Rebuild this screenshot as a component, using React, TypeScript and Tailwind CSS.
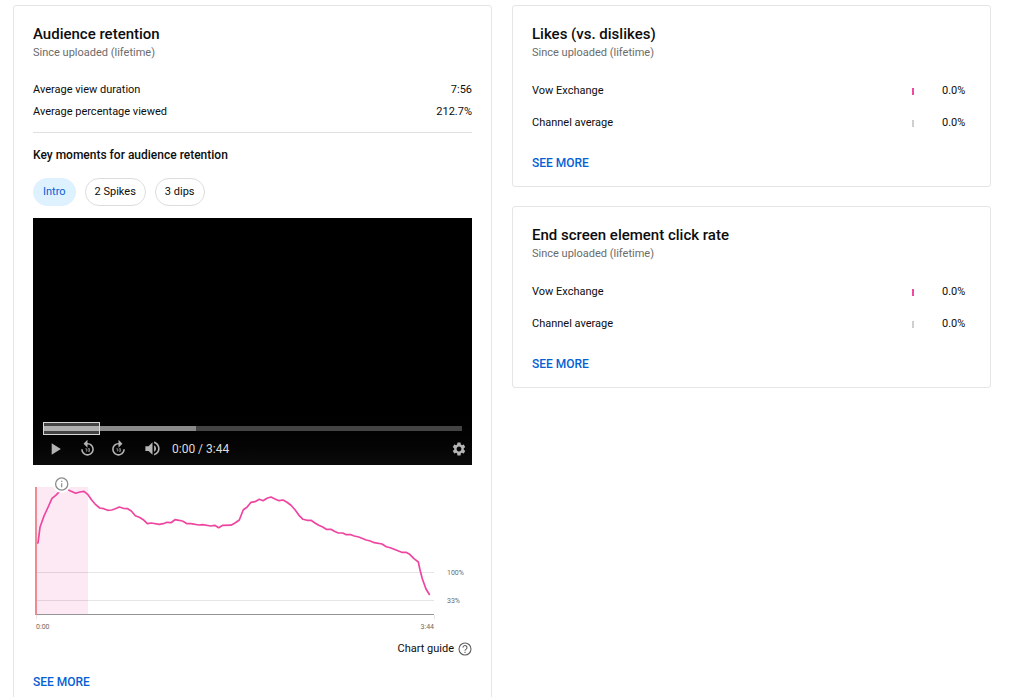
import React from "react";
import { MdForward10, MdPlayArrow, MdReplay10, MdSettings, MdVolumeUp } from "react-icons/md";

const retention =
  "3,69 5,69 7,53.3 11,42 14.7,34 19,24.3 22.7,21.3 26.7,17.3 30.7,13.5 37,16.7 42.7,19.3 46.7,18 51,17.3 55,20.7 58.7,26 62.7,30.7 66.7,34 70.7,34.7 74.7,36.3 78.7,36 82.3,34.7 86.3,33 90.3,34.3 94.7,34.7 98.3,37 102.3,41.7 106.3,43.3 110.3,45.7 114.3,49.7 118.3,49 126.3,50.3 130.3,49.7 134,48.3 138,48.7 142,45.7 146,46.3 150,47.3 154,49.7 158,49.7 165.7,51 169.7,50.7 177.7,52 181.7,51.3 185.7,53.7 189.7,51.3 198,51.2 202,49 206.3,46 210.3,35.7 214,33.3 218,28.3 222,27.7 226.3,25.3 230,26.7 234,24.3 238,23 242,25 246,26.7 250,26 254,28.3 258,31.3 262,35.7 266,41.3 270,45.3 274,46.3 278,46.3 282,49 285.7,51.3 289.7,53 293.3,55.3 298,55.3 301.3,57.3 305.3,59 309.7,59 313.3,60.7 318,60.7 321.3,62 325.7,63 333.3,66 337.3,67 341.3,68.7 349,70 353.3,72.7 357.3,73.7 368.7,78.3 373,78.3 376.7,80.3 381,84.7 385.3,88 387,95.7 389.3,104.7 393,115 396.7,121";

function Card({ title, children }: { title: string; children: React.ReactNode }) {
  return (
    <section className="rounded-[3px] border border-[#e5e5e5] bg-white px-[19px] pt-[18px] pb-[15px]">
      <h2 className="text-[15px] leading-5 font-medium text-[#0d0d0d]">{title}</h2>
      <p className="text-[11px] leading-[18px] text-[#6b6b6b]">Since uploaded (lifetime)</p>
      {children}
    </section>
  );
}

function SeeMore() {
  return (
    <a href="#more" className="block w-fit text-[12px] leading-4 font-medium text-[#065fd4]">
      SEE MORE
    </a>
  );
}

function Metric({ label, value }: { label: string; value: string }) {
  return (
    <div className="flex justify-between">
      <dt>{label}</dt>
      <dd>{value}</dd>
    </div>
  );
}

function ComparisonRow({ label, own }: { label: string; own?: boolean }) {
  return (
    <div className="flex items-center">
      <dt className="flex-1">{label}</dt>
      <dd className="flex items-center gap-7">
        <span className={own ? "h-[7px] w-[2px] bg-[#ee4ba0]" : "h-[7px] w-[2px] bg-[#cfcfcf]"} />
        <span className="w-[29px]">0.0%</span>
      </dd>
    </div>
  );
}

function ComparisonCard({ title }: { title: string }) {
  return (
    <Card title={title}>
      <dl className="mt-[13px] mb-4 text-[11px] leading-8">
        <ComparisonRow label="Vow Exchange" own />
        <ComparisonRow label="Channel average" />
      </dl>
      <SeeMore />
    </Card>
  );
}

function Player() {
  return (
    <div className="mt-3 flex aspect-video flex-col justify-end bg-black bg-linear-to-b from-black from-70% to-[#0b0b0b] px-[10px] pb-[6px] text-[#b4b4b4]">
      <div className="relative flex h-[13px] items-center">
        <div className="h-[5px] w-full bg-[#444444]">
          <div className="h-full w-[36.5%] bg-[#8a8a8a]" />
        </div>
        <div className="absolute inset-y-0 left-0 flex w-[57px] items-center border border-[#d8d8d8] bg-[#444444]">
          <div className="h-[5px] w-full bg-[#b0b0b0]" />
        </div>
      </div>
      <div className="mt-1 flex h-5 items-center">
        <button aria-label="Play" className="ml-[2px]">
          <MdPlayArrow size={20} />
        </button>
        <button aria-label="Back 10 seconds" className="ml-[13px]">
          <MdReplay10 size={19} />
        </button>
        <button aria-label="Forward 10 seconds" className="ml-3">
          <MdForward10 size={19} />
        </button>
        <button aria-label="Mute" className="ml-[15px]">
          <MdVolumeUp size={19} />
        </button>
        <span className="ml-[10px] flex-1 text-[12px] leading-5 text-[#dddddd]">0:00 / 3:44</span>
        <button aria-label="Settings" className="-mr-[5px]">
          <MdSettings size={16} />
        </button>
      </div>
    </div>
  );
}

function RetentionChart() {
  return (
    <svg
      viewBox="0 0 439 160"
      role="img"
      aria-label="Audience retention over time"
      className="mt-[9px] block w-full fill-[#6b6b6b] text-[7px]"
    >
      <rect x="3" y="13" width="52" height="128" fill="#fce9f3" />
      <path d="M3 98.5H401M3 126.5H401M3.5 141v4M401.5 141v4" stroke="#000000" strokeOpacity="0.1" />
      <path d="M3 140.5H401" stroke="#949494" />
      <polyline points={retention} fill="none" stroke="#ee45a0" strokeWidth="1.7" strokeLinejoin="round" />
      <path d="M3 13V141" stroke="#ef8a94" strokeWidth="2" />
      <circle cx="28.7" cy="10" r="9" fill="#ffffff" />
      <circle cx="28.7" cy="10" r="6.1" fill="#ffffff" stroke="#8c8c8c" strokeWidth="1.3" />
      <path d="M28.7 9.2V13.3M28.7 6.7V8" stroke="#8c8c8c" strokeWidth="1.2" />
      <text x="414" y="101">100%</text>
      <text x="414" y="129">33%</text>
      <text x="3" y="155">0:00</text>
      <text x="401" y="155" textAnchor="end">3:44</text>
    </svg>
  );
}

export default function App() {
  return (
    <main className="grid grid-cols-2 items-start gap-5 bg-white pt-[5px] pr-[33px] pl-[13px] font-['Roboto',sans-serif] text-[#0d0d0d]">
      <Card title="Audience retention">
        <dl className="mt-[17px] border-b border-[#dfdfdf] pb-[9px] text-[11px] leading-[22px]">
          <Metric label="Average view duration" value="7:56" />
          <Metric label="Average percentage viewed" value="212.7%" />
        </dl>
        <h3 className="mt-3 text-[12px] leading-5 font-medium">Key moments for audience retention</h3>
        <div className="mt-[13px] flex gap-[9px] text-[11px] leading-[26px]">
          <button className="rounded-full border border-[#def1ff] bg-[#def1ff] px-[9px] text-[#065fd4]">Intro</button>
          <button className="rounded-full border border-[#dddddd] px-[9px]">2 Spikes</button>
          <button className="rounded-full border border-[#dddddd] px-[9px]">3 dips</button>
        </div>
        <Player />
        <RetentionChart />
        <a href="#guide" className="mt-[7px] mb-[17px] ml-auto flex w-fit items-center gap-1 text-[11px] leading-4">
          Chart guide
          <svg viewBox="0 0 14 14" className="size-[14px]" fill="none" stroke="#606060" strokeWidth="1.1" aria-hidden="true">
            <circle cx="7" cy="7" r="6" />
            <path d="M5 5.6a2 2 0 1 1 3.2 1.5C7.4 7.6 7 7.9 7 8.7M7 9.7v1.2" />
          </svg>
        </a>
        <SeeMore />
      </Card>
      <div className="grid gap-[19px]">
        <ComparisonCard title="Likes (vs. dislikes)" />
        <ComparisonCard title="End screen element click rate" />
      </div>
    </main>
  );
}
